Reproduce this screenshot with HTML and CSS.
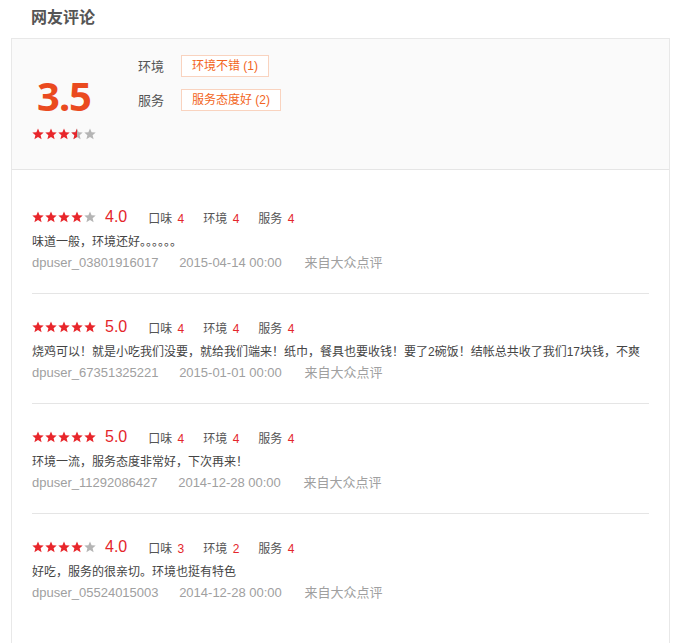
FILE: index.html
```html
<!DOCTYPE html>
<html lang="zh">
<head>
  <meta charset="UTF-8" />
  <title>网友评论</title>
  <link rel="stylesheet" href="styles.css">
</head>
<body>
  <h2 class="title">网友评论</h2>

  <div class="comment-box">
    <div class="summary">
      <div class="score">
        <div class="score-num">3.5</div>
        <svg class="stars" width="64" height="12" viewBox="0 0 64 12">
          <defs>
            <clipPath id="half"><rect x="39" y="0" width="6" height="12"/></clipPath>
          </defs>
          <polygon class="on" points="6,0.5 7.6,4.3 11.7,4.6 8.6,7.3 9.6,11.3 6,9.1 2.4,11.3 3.4,7.3 0.3,4.6 4.4,4.3"/>
          <polygon class="on" transform="translate(13,0)" points="6,0.5 7.6,4.3 11.7,4.6 8.6,7.3 9.6,11.3 6,9.1 2.4,11.3 3.4,7.3 0.3,4.6 4.4,4.3"/>
          <polygon class="on" transform="translate(26,0)" points="6,0.5 7.6,4.3 11.7,4.6 8.6,7.3 9.6,11.3 6,9.1 2.4,11.3 3.4,7.3 0.3,4.6 4.4,4.3"/>
          <polygon class="off" transform="translate(39,0)" points="6,0.5 7.6,4.3 11.7,4.6 8.6,7.3 9.6,11.3 6,9.1 2.4,11.3 3.4,7.3 0.3,4.6 4.4,4.3"/>
          <g clip-path="url(#half)">
            <polygon class="on" transform="translate(39,0)" points="6,0.5 7.6,4.3 11.7,4.6 8.6,7.3 9.6,11.3 6,9.1 2.4,11.3 3.4,7.3 0.3,4.6 4.4,4.3"/>
          </g>
          <polygon class="off" transform="translate(52,0)" points="6,0.5 7.6,4.3 11.7,4.6 8.6,7.3 9.6,11.3 6,9.1 2.4,11.3 3.4,7.3 0.3,4.6 4.4,4.3"/>
        </svg>
      </div>
      <div class="tags">
        <div class="tag-row">
          <span class="tag-label">环境</span>
          <span class="tag">环境不错 (1)</span>
        </div>
        <div class="tag-row">
          <span class="tag-label">服务</span>
          <span class="tag">服务态度好 (2)</span>
        </div>
      </div>
    </div>

    <ul class="review-list">
      <li class="review">
        <div class="review-head">
          <svg class="stars" width="64" height="12" viewBox="0 0 64 12">
            <polygon class="on" points="6,0.5 7.6,4.3 11.7,4.6 8.6,7.3 9.6,11.3 6,9.1 2.4,11.3 3.4,7.3 0.3,4.6 4.4,4.3"/>
            <polygon class="on" transform="translate(13,0)" points="6,0.5 7.6,4.3 11.7,4.6 8.6,7.3 9.6,11.3 6,9.1 2.4,11.3 3.4,7.3 0.3,4.6 4.4,4.3"/>
            <polygon class="on" transform="translate(26,0)" points="6,0.5 7.6,4.3 11.7,4.6 8.6,7.3 9.6,11.3 6,9.1 2.4,11.3 3.4,7.3 0.3,4.6 4.4,4.3"/>
            <polygon class="on" transform="translate(39,0)" points="6,0.5 7.6,4.3 11.7,4.6 8.6,7.3 9.6,11.3 6,9.1 2.4,11.3 3.4,7.3 0.3,4.6 4.4,4.3"/>
            <polygon class="off" transform="translate(52,0)" points="6,0.5 7.6,4.3 11.7,4.6 8.6,7.3 9.6,11.3 6,9.1 2.4,11.3 3.4,7.3 0.3,4.6 4.4,4.3"/>
          </svg>
          <span class="rate">4.0</span>
          <span class="sub">口味 <em>4</em></span>
          <span class="sub">环境 <em>4</em></span>
          <span class="sub">服务 <em>4</em></span>
        </div>
        <p class="review-text">味道一般，环境还好。。。。。。</p>
        <div class="review-meta">
          <span>dpuser_03801916017</span>
          <span>2015-04-14 00:00</span>
          <span>来自大众点评</span>
        </div>
      </li>

      <li class="review">
        <div class="review-head">
          <svg class="stars" width="64" height="12" viewBox="0 0 64 12">
            <polygon class="on" points="6,0.5 7.6,4.3 11.7,4.6 8.6,7.3 9.6,11.3 6,9.1 2.4,11.3 3.4,7.3 0.3,4.6 4.4,4.3"/>
            <polygon class="on" transform="translate(13,0)" points="6,0.5 7.6,4.3 11.7,4.6 8.6,7.3 9.6,11.3 6,9.1 2.4,11.3 3.4,7.3 0.3,4.6 4.4,4.3"/>
            <polygon class="on" transform="translate(26,0)" points="6,0.5 7.6,4.3 11.7,4.6 8.6,7.3 9.6,11.3 6,9.1 2.4,11.3 3.4,7.3 0.3,4.6 4.4,4.3"/>
            <polygon class="on" transform="translate(39,0)" points="6,0.5 7.6,4.3 11.7,4.6 8.6,7.3 9.6,11.3 6,9.1 2.4,11.3 3.4,7.3 0.3,4.6 4.4,4.3"/>
            <polygon class="on" transform="translate(52,0)" points="6,0.5 7.6,4.3 11.7,4.6 8.6,7.3 9.6,11.3 6,9.1 2.4,11.3 3.4,7.3 0.3,4.6 4.4,4.3"/>
          </svg>
          <span class="rate">5.0</span>
          <span class="sub">口味 <em>4</em></span>
          <span class="sub">环境 <em>4</em></span>
          <span class="sub">服务 <em>4</em></span>
        </div>
        <p class="review-text">烧鸡可以！就是小吃我们没要，就给我们端来！纸巾，餐具也要收钱！要了2碗饭！结帐总共收了我们17块钱，不爽</p>
        <div class="review-meta">
          <span>dpuser_67351325221</span>
          <span>2015-01-01 00:00</span>
          <span>来自大众点评</span>
        </div>
      </li>

      <li class="review">
        <div class="review-head">
          <svg class="stars" width="64" height="12" viewBox="0 0 64 12">
            <polygon class="on" points="6,0.5 7.6,4.3 11.7,4.6 8.6,7.3 9.6,11.3 6,9.1 2.4,11.3 3.4,7.3 0.3,4.6 4.4,4.3"/>
            <polygon class="on" transform="translate(13,0)" points="6,0.5 7.6,4.3 11.7,4.6 8.6,7.3 9.6,11.3 6,9.1 2.4,11.3 3.4,7.3 0.3,4.6 4.4,4.3"/>
            <polygon class="on" transform="translate(26,0)" points="6,0.5 7.6,4.3 11.7,4.6 8.6,7.3 9.6,11.3 6,9.1 2.4,11.3 3.4,7.3 0.3,4.6 4.4,4.3"/>
            <polygon class="on" transform="translate(39,0)" points="6,0.5 7.6,4.3 11.7,4.6 8.6,7.3 9.6,11.3 6,9.1 2.4,11.3 3.4,7.3 0.3,4.6 4.4,4.3"/>
            <polygon class="on" transform="translate(52,0)" points="6,0.5 7.6,4.3 11.7,4.6 8.6,7.3 9.6,11.3 6,9.1 2.4,11.3 3.4,7.3 0.3,4.6 4.4,4.3"/>
          </svg>
          <span class="rate">5.0</span>
          <span class="sub">口味 <em>4</em></span>
          <span class="sub">环境 <em>4</em></span>
          <span class="sub">服务 <em>4</em></span>
        </div>
        <p class="review-text">环境一流，服务态度非常好，下次再来！</p>
        <div class="review-meta">
          <span>dpuser_11292086427</span>
          <span>2014-12-28 00:00</span>
          <span>来自大众点评</span>
        </div>
      </li>

      <li class="review">
        <div class="review-head">
          <svg class="stars" width="64" height="12" viewBox="0 0 64 12">
            <polygon class="on" points="6,0.5 7.6,4.3 11.7,4.6 8.6,7.3 9.6,11.3 6,9.1 2.4,11.3 3.4,7.3 0.3,4.6 4.4,4.3"/>
            <polygon class="on" transform="translate(13,0)" points="6,0.5 7.6,4.3 11.7,4.6 8.6,7.3 9.6,11.3 6,9.1 2.4,11.3 3.4,7.3 0.3,4.6 4.4,4.3"/>
            <polygon class="on" transform="translate(26,0)" points="6,0.5 7.6,4.3 11.7,4.6 8.6,7.3 9.6,11.3 6,9.1 2.4,11.3 3.4,7.3 0.3,4.6 4.4,4.3"/>
            <polygon class="on" transform="translate(39,0)" points="6,0.5 7.6,4.3 11.7,4.6 8.6,7.3 9.6,11.3 6,9.1 2.4,11.3 3.4,7.3 0.3,4.6 4.4,4.3"/>
            <polygon class="off" transform="translate(52,0)" points="6,0.5 7.6,4.3 11.7,4.6 8.6,7.3 9.6,11.3 6,9.1 2.4,11.3 3.4,7.3 0.3,4.6 4.4,4.3"/>
          </svg>
          <span class="rate">4.0</span>
          <span class="sub">口味 <em>3</em></span>
          <span class="sub">环境 <em>2</em></span>
          <span class="sub">服务 <em>4</em></span>
        </div>
        <p class="review-text">好吃，服务的很亲切。环境也挺有特色</p>
        <div class="review-meta">
          <span>dpuser_05524015003</span>
          <span>2014-12-28 00:00</span>
          <span>来自大众点评</span>
        </div>
      </li>
    </ul>
  </div>
</body>
</html>
```

FILE: styles.css
```css
body {
  margin: 0;
  padding: 0 18px 0 11px;
  font-family: "Liberation Sans", "Noto Sans CJK SC", sans-serif;
  font-size: 12px;
  color: #444;
  background: #fff;
}
.title {
  margin: 0;
  padding: 7px 0 0 20px;
  height: 31px;
  line-height: 22px;
  font-size: 16px;
  font-weight: bold;
  color: #555;
}
.comment-box {
  border: 1px solid #e8e8e8;
  border-bottom: none;
  height: 620px;
}
.summary {
  display: flex;
  height: 130px;
  padding-left: 20px;
  background: #fafafa;
  border-bottom: 1px solid #e5e5e5;
}
.score {
  width: 64px;
  padding-top: 37px;
  text-align: center;
}
.score-num {
  font-size: 40px;
  line-height: 40px;
  font-weight: bold;
  color: #ea4a1f;
  font-family: "Noto Sans", "Liberation Sans", sans-serif;
  letter-spacing: -1px;
}
.score .stars {
  display: block;
  margin-top: 12px;
}
.stars .on {
  fill: #e8262b;
}
.stars .off {
  fill: #b5b5b5;
}
.tags {
  margin-left: 42px;
  padding-top: 16px;
}
.tag-row {
  display: flex;
  align-items: center;
  height: 22px;
  margin-bottom: 12px;
}
.tag-label {
  width: 43px;
  font-size: 13px;
  color: #555;
  position: relative;
  top: -1px;
}
.tag {
  display: inline-block;
  height: 20px;
  line-height: 20px;
  padding: 0 10px;
  border: 1px solid #f9d3bf;
  background: #fff;
  color: #f26522;
  font-size: 12px;
}
.review-list {
  list-style: none;
  margin: 0;
  padding: 14px 20px 0;
}
.review {
  padding: 23px 0 20px;
  border-bottom: 1px solid #e5e5e5;
}
.review:last-child {
  border-bottom: none;
}
.review-head {
  display: flex;
  align-items: center;
  height: 20px;
  margin-bottom: 5px;
}
.rate {
  margin: 0 21px 0 9px;
  font-size: 16px;
  color: #e4262b;
}
.sub {
  margin-right: 19px;
  font-size: 12px;
  color: #555;
}
.sub em {
  font-style: normal;
  color: #e4262b;
  margin-left: 2px;
}
.review-text {
  margin: 0;
  line-height: 20px;
  color: #444;
  white-space: nowrap;
  overflow: hidden;
}
.review-meta {
  margin-top: 1px;
  line-height: 20px;
  color: #a0a0a0;
  font-size: 13px;
}
.review-meta span {
  margin-right: 17px;
}
.review-meta span:nth-child(2) {
  margin-right: 19px;
}
```
